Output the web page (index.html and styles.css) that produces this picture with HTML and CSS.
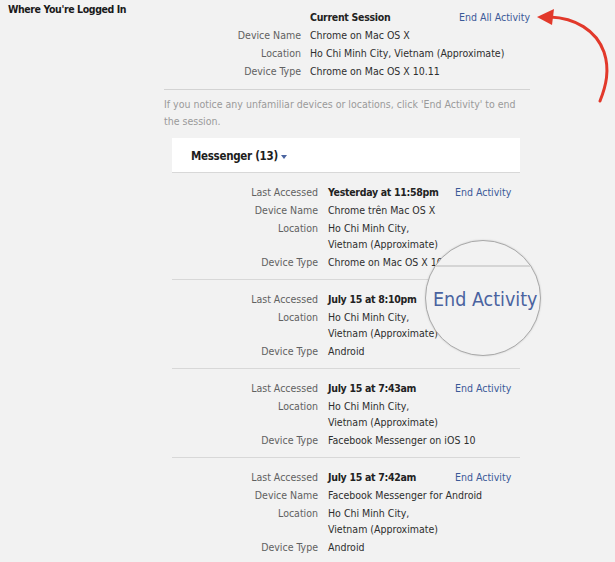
FILE: index.html
```html
<!DOCTYPE html>
<html lang="en">
<head>
    <meta charset="UTF-8">
    <meta name="viewport" content="width=device-width, initial-scale=1.0">
    <title>Where You're Logged In</title>
    <link rel="stylesheet" href="styles.css">
</head>
<body>

    <div class="page">
        <h1 class="page-title">Where You're Logged In</h1>

        <div class="main">
            <div class="session">
                <span class="label"></span>
                <span class="value strong">Current Session</span>
                <a class="link" href="#">End All Activity</a>
                <span class="label">Device Name</span>
                <span class="value wide">Chrome on Mac OS X</span>
                <span class="label">Location</span>
                <span class="value wide">Ho Chi Minh City, Vietnam (Approximate)</span>
                <span class="label">Device Type</span>
                <span class="value wide">Chrome on Mac OS X 10.11</span>
            </div>

            <p class="note">If you notice any unfamiliar devices or locations, click 'End Activity' to end the session.</p>

            <div class="group">
                <div class="group-head">Messenger (13)<span class="caret"></span></div>

                <div class="entry">
                    <span class="label">Last Accessed</span>
                    <span class="value strong">Yesterday at 11:58pm</span>
                    <a class="link" href="#">End Activity</a>
                    <span class="label">Device Name</span>
                    <span class="value wide">Chrome trên Mac OS X</span>
                    <span class="label">Location</span>
                    <span class="value wide">Ho Chi Minh City,<br>Vietnam (Approximate)</span>
                    <span class="label">Device Type</span>
                    <span class="value wide">Chrome on Mac OS X 10.11</span>
                </div>

                <div class="entry">
                    <span class="label">Last Accessed</span>
                    <span class="value strong">July 15 at 8:10pm</span>
                    <!-- this row's link is shown under a magnifier -->
                    <span class="mag-cell">
                        <span class="magnifier">
                            <span class="mag-line"></span>
                            <a class="mag-link" href="#">End Activity</a>
                        </span>
                    </span>
                    <span class="label">Location</span>
                    <span class="value wide">Ho Chi Minh City,<br>Vietnam (Approximate)</span>
                    <span class="label">Device Type</span>
                    <span class="value wide">Android</span>
                </div>

                <div class="entry">
                    <span class="label">Last Accessed</span>
                    <span class="value strong">July 15 at 7:43am</span>
                    <a class="link" href="#">End Activity</a>
                    <span class="label">Location</span>
                    <span class="value wide">Ho Chi Minh City,<br>Vietnam (Approximate)</span>
                    <span class="label">Device Type</span>
                    <span class="value wide">Facebook Messenger on iOS 10</span>
                </div>

                <div class="entry">
                    <span class="label">Last Accessed</span>
                    <span class="value strong">July 15 at 7:42am</span>
                    <a class="link" href="#">End Activity</a>
                    <span class="label">Device Name</span>
                    <span class="value wide">Facebook Messenger for Android</span>
                    <span class="label">Location</span>
                    <span class="value wide">Ho Chi Minh City,<br>Vietnam (Approximate)</span>
                    <span class="label">Device Type</span>
                    <span class="value wide">Android</span>
                </div>
            </div>
        </div>

        <!-- annotation: arrow pointing at "End All Activity" -->
        <svg class="arrow" width="80" height="100" viewBox="530 5 80 100">
            <path d="M550 17 C575 18 596 30 604 52 C610 70 606 86 600 101" fill="none" stroke="#e2392b" stroke-width="3" stroke-linecap="round"/>
            <path d="M537 17 L554 9 L552 25 Z" fill="#e2392b"/>
        </svg>
    </div>

</body>
</html>
```

FILE: styles.css
```css
body {
    margin: 0;
    background-color: #f2f2f2;
    font-family: "DejaVu Sans Condensed", "DejaVu Sans", sans-serif;
    font-size: 10.5px;
    color: #333;
}
.page {
    position: relative;
    display: grid;
    grid-template-columns: 164px 366px;
    padding-top: 1px;
    min-height: 561px;
}
.page-title {
    margin: 0;
    padding-left: 8px;
    font-size: 10.5px;
    line-height: 16px;
    font-weight: bold;
    letter-spacing: -0.4px;
    color: #1a1a1a;
}
.main {
    padding-top: 8px;
}
.label {
    text-align: right;
    color: #616161;
}
.value {
    color: #2e2e2e;
}
.value.strong {
    font-weight: bold;
    letter-spacing: -0.3px;
    color: #222;
}
.link {
    color: #3b5998;
    text-decoration: none;
}
.session {
    display: grid;
    grid-template-columns: 137px 1fr auto;
    column-gap: 9px;
    row-gap: 2px;
    line-height: 16px;
    padding-bottom: 10px;
    border-bottom: 1px solid #d3d3d3;
}
.session .value.wide {
    grid-column: span 2;
}
.note {
    margin: 6px 0 8px;
    line-height: 17px;
    color: #9a9a9a;
}
.group {
    margin: 0 10px 0 8px;
}
.group-head {
    background-color: #fff;
    padding: 10px 19px 8px;
    line-height: 16px;
    font-size: 11.5px;
    font-weight: bold;
    letter-spacing: -0.3px;
    color: #1d1d1d;
    border-bottom: 1px solid #d8d8d8;
}
.caret {
    display: inline-block;
    margin-left: 3px;
    vertical-align: middle;
    border-left: 3.5px solid transparent;
    border-right: 3.5px solid transparent;
    border-top: 4px solid #4a64a0;
}
.entry {
    display: grid;
    grid-template-columns: 146px 117px auto;
    column-gap: 10px;
    row-gap: 2px;
    line-height: 16px;
    padding: 11px 0 9px;
}
.entry + .entry {
    border-top: 1px solid #d8d8d8;
}
.entry .value.wide {
    grid-column: span 2;
}
.arrow {
    position: absolute;
    left: 530px;
    top: 5px;
}
.mag-cell {
    position: relative;
}
.magnifier {
    position: absolute;
    left: -30px;
    top: -51px;
    width: 116px;
    height: 116px;
    border-radius: 50%;
    border: 1px solid #a9a9a9;
    background-color: #f2f2f2;
    overflow: hidden;
    box-sizing: border-box;
    box-shadow: 0 0 2px rgba(0, 0, 0, 0.15);
}
.mag-line {
    position: absolute;
    left: 0;
    right: 0;
    top: 24px;
    height: 2px;
    background-color: #d5d5d5;
}
.mag-link {
    position: absolute;
    left: 7px;
    top: 46px;
    font-size: 19.5px;
    line-height: 26px;
    color: #4a63a0;
    text-decoration: none;
}
```
